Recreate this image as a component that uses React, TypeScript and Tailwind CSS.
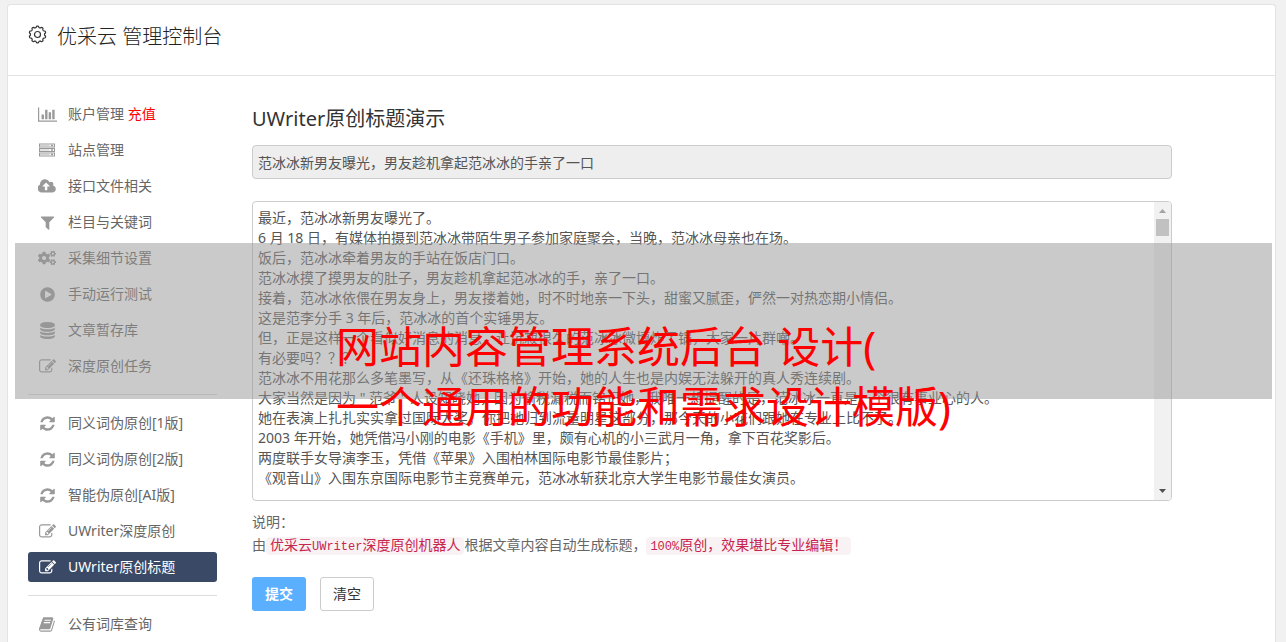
import React from "react";
import { FaCogs } from "react-icons/fa";

type IconProps = { d: string; box?: string; width?: number };

function Glyph({ d, box = "0 0 1792 1792", width = 17 }: IconProps) {
  return (
    <svg viewBox={box} width={width} height={17} fill="currentColor" aria-hidden="true">
      <path d={d} />
    </svg>
  );
}

const EDIT =
  "M888 1184l116-116-152-152-116 116v56h96v96h56zm440-720q-16-16-33 1l-350 350q-17 17-1 33t33-1l350-350q17-17 1-33zm80 594v190q0 119-84.5 203.5t-203.5 84.5h-832q-119 0-203.5-84.5t-84.5-203.5v-832q0-119 84.5-203.5t203.5-84.5h832q63 0 117 25 15 7 18 23 3 17-9 29l-49 49q-14 14-32 8-23-6-45-6h-832q-66 0-113 47t-47 113v832q0 66 47 113t113 47h832q66 0 113-47t47-113v-126q0-13 9-22l64-64q15-15 35-7t20 29zm-96-738l288 288-672 672h-288v-288zm444 132l-92 92-288-288 92-92q28-28 68-28t68 28l152 152q28 28 28 68t-28 68z";
const REFRESH =
  "M1639 1056q0 5-1 7-64 268-268 434.5t-478 166.5q-146 0-282.5-55t-243.5-157l-129 129q-19 19-45 19t-45-19-19-45v-448q0-26 19-45t45-19h448q26 0 45 19t19 45-19 45l-137 137q71 66 161 102t187 36q134 0 250-65t186-179q11-17 53-117 8-23 30-23h192q13 0 22.5 9.5t9.5 22.5zm25-800v448q0 26-19 45t-45 19h-448q-26 0-45-19t-19-45 19-45l138-138q-148-137-349-137-134 0-250 65t-186 179q-11 17-53 117-8 23-30 23h-199q-13 0-22.5-9.5t-9.5-22.5v-7q65-268 270-434.5t480-166.5q146 0 284 55.5t245 156.5l130-129q19-19 45-19t45 19 19 45z";
const DATABASE =
  "M896 768q237 0 443-43t325-127v170q0 69-103 128t-280 93.5-385 34.5-385-34.5-280-93.5-103-128v-170q119 84 325 127t443 43zm0 768q237 0 443-43t325-127v170q0 69-103 128t-280 93.5-385 34.5-385-34.5-280-93.5-103-128v-170q119 84 325 127t443 43zm0-384q237 0 443-43t325-127v170q0 69-103 128t-280 93.5-385 34.5-385-34.5-280-93.5-103-128v-170q119 84 325 127t443 43zm0-1152q208 0 385 34.5t280 93.5 103 128v128q0 69-103 128t-280 93.5-385 34.5-385-34.5-280-93.5-103-128v-128q0-69 103-128t280-93.5 385-34.5z";
const FILTER =
  "M1595 295q17 41-14 70l-493 493v742q0 42-39 59-13 5-25 5-27 0-45-19l-256-256q-19-19-19-45v-486l-493-493q-31-29-14-70 17-39 59-39h1280q42 0 59 39z";
const PLAY =
  "M896 128q209 0 385.5 103t279.5 279.5 103 385.5-103 385.5-279.5 279.5-385.5 103-385.5-103-279.5-279.5-103-385.5 103-385.5 279.5-279.5 385.5-103zm384 823q32-18 32-55t-32-55l-544-320q-31-19-64-1-32 19-32 56v640q0 37 32 56 16 8 32 8 17 0 32-9z";
const UPLOAD =
  "M1216 864q0-14-9-23l-352-352q-9-9-23-9t-23 9l-351 351q-10 12-10 24 0 14 9 23t23 9h224v352q0 13 9.5 22.5t22.5 9.5h192q13 0 22.5-9.5t9.5-22.5v-352h224q13 0 22.5-9.5t9.5-22.5zm640 288q0 159-112.5 271.5t-271.5 112.5h-1088q-185 0-316.5-131.5t-131.5-316.5q0-130 70-240t188-165q-2-30-2-43 0-212 150-362t362-150q156 0 285.5 87t188.5 231q71-62 166-62 106 0 181 75t75 181q0 76-41 138 130 31 213.5 135.5t83.5 238.5z";
const BOOK =
  "M1639 478q40 57 18 129l-275 906q-19 64-76.5 107.5t-122.5 43.5h-923q-77 0-148.5-53.5t-99.5-131.5q-24-67-2-127 0-4 3-27t4-37q1-8-3-21.5t-3-19.5q2-11 8-21t16.5-23.5 16.5-23.5q23-38 45-91.5t30-91.5q3-10 .5-30t-.5-28q3-11 17-28t17-23q21-36 42-92t25-90q1-9-2.5-32t.5-28q4-13 22-30.5t22-22.5q19-26 42.5-84.5t27.5-96.5q1-8-3-25.5t-2-26.5q2-8 9-18t18-23 17-21q8-12 16.5-30.5t15-35 16-36 19.5-32 26.5-23.5 36-11.5 47.5 5.5l-1 3q38-9 51-9h761q74 0 114 56t18 130l-274 906q-36 119-71.5 153.5t-128.5 34.5h-869q-27 0-38 15-11 16-1 43 24 70 144 70h923q29 0 56-15.5t35-41.5l300-987q7-22 5-57 38 15 59 43zm-1064 2q-4 13 2 22.5t20 9.5h608q13 0 25.5-9.5t16.5-22.5l21-64q4-13-2-22.5t-20-9.5h-608q-13 0-25.5 9.5t-16.5 22.5zm-83 256q-4 13 2 22.5t20 9.5h608q13 0 25.5-9.5t16.5-22.5l21-64q4-13-2-22.5t-20-9.5h-608q-13 0-25.5 9.5t-16.5 22.5z";
const CHART =
  "M640 896v512H384V896h256zm384-512v1024H768V384h256zm1024 1152v128H0V128h128v1408h1920zm-640-896v768h-256V640h256zm384-256v1024h-256V384h256z";

function ServerIcon() {
  return (
    <svg viewBox="0 0 16 14" width={16} height={14} fill="none" stroke="currentColor" aria-hidden="true">
      {[1, 5.5, 10].map((y) => (
        <g key={y}>
          <rect x="0.5" y={y} width="15" height="3" strokeWidth="1" />
          <path d={`M1 ${y + 1.5}H10.5`} strokeWidth="1.2" opacity="0.45" />
          <path d={`M12 ${y + 1.5}h2`} strokeWidth="1.6" />
        </g>
      ))}
    </svg>
  );
}

const gearOutline = Array.from({ length: 120 }, (_, i) => {
  const a = (i / 120) * Math.PI * 2;
  const r = 7.7 + 0.7 * Math.tanh(2 * Math.cos(10 * a));
  return `${(9.5 + r * Math.sin(a)).toFixed(2)},${(9.5 - r * Math.cos(a)).toFixed(2)}`;
}).join(" ");

function GearIcon() {
  return (
    <svg viewBox="0 0 20 20" width={20} height={20} fill="none" stroke="#333" strokeWidth="1.2" aria-hidden="true">
      <polygon points={gearOutline} strokeLinejoin="round" />
      <circle cx="9.5" cy="9.5" r="3" />
    </svg>
  );
}

type Item = { label: string; icon: React.ReactNode; extra?: string; active?: boolean };

const edit = <Glyph d={EDIT} />;
const refresh = <Glyph d={REFRESH} />;

const groups: Item[][] = [
  [
    { label: "账户管理", extra: "充值", icon: <Glyph d={CHART} box="0 0 2048 1792" width={19} /> },
    { label: "站点管理", icon: <ServerIcon /> },
    { label: "接口文件相关", icon: <Glyph d={UPLOAD} box="0 0 1856 1792" width={18} /> },
    { label: "栏目与关键词", icon: <Glyph d={FILTER} /> },
    { label: "采集细节设置", icon: <FaCogs size={18} /> },
    { label: "手动运行测试", icon: <Glyph d={PLAY} /> },
    { label: "文章暂存库", icon: <Glyph d={DATABASE} /> },
    { label: "深度原创任务", icon: edit },
  ],
  [
    { label: "同义词伪原创[1版]", icon: refresh },
    { label: "同义词伪原创[2版]", icon: refresh },
    { label: "智能伪原创[AI版]", icon: refresh },
    { label: "UWriter深度原创", icon: edit },
    { label: "UWriter原创标题", icon: edit, active: true },
  ],
  [{ label: "公有词库查询", icon: <Glyph d={BOOK} /> }],
];

const article = [
  "最近，范冰冰新男友曝光了。",
  "6 月 18 日，有媒体拍摄到范冰冰带陌生男子参加家庭聚会，当晚，范冰冰母亲也在场。",
  "饭后，范冰冰牵着男友的手站在饭店门口。",
  "范冰冰摸了摸男友的肚子，男友趁机拿起范冰冰的手，亲了一口。",
  "接着，范冰冰依偎在男友身上，男友搂着她，时不时地亲一下头，甜蜜又腻歪，俨然一对热恋期小情侣。",
  "这是范李分手 3 年后，范冰冰的首个实锤男友。",
  "但，正是这样一个看似好消息的消息，让沉寂很久的范冰冰微博炸了锅，大家一片群嘲。",
  "有必要吗？？？",
  "范冰冰不用花那么多笔墨写，从《还珠格格》开始，她的人生也是内娱无法躲开的真人秀连续剧。",
  '大家当然是因为 " 范爷 " 人设知晓她，因为偷税漏税而铭记她，我唯一想提醒的是，范冰冰一直是一个很有事业心的人。',
  "她在表演上扎扎实实拿过国际大奖，你把她归到流量明星这部分，那今天的小花们跟她在专业上比不了。",
  "2003 年开始，她凭借冯小刚的电影《手机》里，颇有心机的小三武月一角，拿下百花奖影后。",
  "两度联手女导演李玉，凭借《苹果》入围柏林国际电影节最佳影片；",
  "《观音山》入围东京国际电影节主竞赛单元，范冰冰斩获北京大学生电影节最佳女演员。",
].join("\n");

function NavLink({ item }: { item: Item }) {
  return (
    <a
      href="#"
      className={
        item.active
          ? "flex h-[30px] items-center gap-[11px] rounded-[3px] bg-[#3a4a66] pl-[9px] text-white"
          : "flex h-[30px] items-center gap-[11px] rounded-[3px] pl-[9px] text-[#666]"
      }
    >
      <span className={item.active ? "flex w-5 justify-center text-white" : "flex w-5 justify-center text-[#999]"}>
        {item.icon}
      </span>
      <span>
        {item.label}
        {item.extra && <span className="text-[#f00]"> {item.extra}</span>}
      </span>
    </a>
  );
}

function Code({ children }: { children: React.ReactNode }) {
  return (
    <code className="rounded bg-[#f9f2f4] px-1 py-px font-['Liberation_Mono','Noto_Sans_CJK_SC',monospace] text-sm text-[#c7254e]">
      {children}
    </code>
  );
}

export default function App() {
  return (
    <div
      lang="zh-CN"
      className="relative min-h-screen bg-[#f1f1f1] pt-1 pr-2.5 pl-[7px] font-['Noto_Sans','Noto_Sans_CJK_SC',sans-serif] text-sm leading-5 text-[#666]"
    >
      <div className="min-h-[calc(100vh-4px)] rounded-t border border-b-0 border-[#e3e3e3] bg-white">
        <header className="flex h-[71px] items-start gap-[9px] border-b border-[#e3e3e3] pt-5 pl-5">
          <GearIcon />
          <h1 className="text-xl leading-6 font-light text-[#222]">优采云 管理控制台</h1>
        </header>

        <div className="flex gap-[35px] px-5 pt-[23px]">
          <nav className="w-[189px] shrink-0 pb-[3px]">
            {groups.map((group, i) => (
              <div
                key={i}
                className={i > 0 ? "mt-[13px] flex flex-col gap-1.5 border-t border-[#ddd] pt-[13px]" : "flex flex-col gap-1.5"}
              >
                {group.map((item) => (
                  <NavLink key={item.label} item={item} />
                ))}
              </div>
            ))}
          </nav>

          <main className="max-w-[920px] min-w-0 flex-1 pt-2">
            <h2 className="text-xl leading-6 text-[#333]">UWriter原创标题演示</h2>
            <input
              aria-label="原创标题"
              readOnly
              value="范冰冰新男友曝光，男友趁机拿起范冰冰的手亲了一口"
              className="mt-3.5 block h-[34px] w-full rounded border border-[#ccc] bg-[#eee] px-[5px] text-[#555] outline-none"
            />
            <div className="mt-[22px] flex h-[300px] overflow-hidden rounded border border-[#ccc]">
              <textarea
                aria-label="文章内容"
                defaultValue={article}
                className="block min-w-0 flex-1 resize-none overflow-hidden px-[5px] py-1.5 leading-5 text-[#555] outline-none"
              />
              <div className="flex w-[17px] flex-col items-center bg-[#f1f1f1]" aria-hidden="true">
                <svg width="17" height="17" viewBox="0 0 17 17">
                  <path d="M5 11l3.500-4 3.500 4z" fill="#a3a3a3" />
                </svg>
                <div className="h-[17px] w-[13px] bg-[#c1c1c1]" />
                <svg width="17" height="17" viewBox="0 0 17 17" className="mt-auto">
                  <path d="M5 6l3.500 4 3.500-4z" fill="#505050" />
                </svg>
              </div>
            </div>

            <div className="mt-[9px] leading-[23px]">
              <p>说明：</p>
              <p>
                由
                <Code>
                  优采云<span className="text-xs">UWriter</span>深度原创机器人
                </Code>
                根据文章内容自动生成标题，
                <Code>
                  <span className="text-xs">100%</span>原创，效果堪比专业编辑！
                </Code>
              </p>
            </div>

            <div className="mt-[21px] flex gap-3.5">
              <button type="submit" className="h-[34px] w-[54px] rounded-[3px] bg-[#5aafff] font-bold text-white">
                提交
              </button>
              <button type="reset" className="h-[34px] w-[54px] rounded-[3px] border border-[#ccc] bg-white text-[#333]">
                清空
              </button>
            </div>
          </main>
        </div>
      </div>

      <div className="pointer-events-none absolute top-[243px] right-3.5 left-[15px] flex h-[156px] justify-center bg-[#969696]/50 pt-[74px]">
        <p className="text-[43px] leading-[60px] whitespace-nowrap text-[#f00]">
          网站内容管理系统后台 设计(
          <br />
          一个通用的功能和需求设计模版)
        </p>
      </div>
    </div>
  );
}
